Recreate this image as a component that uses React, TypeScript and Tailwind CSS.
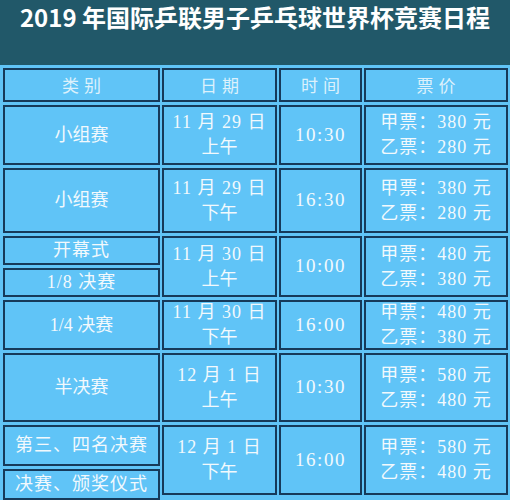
const rows = [
  { type: ["小组赛"], date: "11 月 29 日", half: "上午", time: "10:30", a: "380", b: "280" },
  { type: ["小组赛"], date: "11 月 29 日", half: "下午", time: "16:30", a: "380", b: "280" },
  { type: ["开幕式", "1/8 决赛"], date: "11 月 30 日", half: "上午", time: "10:00", a: "480", b: "380" },
  { type: ["1/4 决赛"], date: "11 月 30 日", half: "下午", time: "16:00", a: "480", b: "380" },
  { type: ["半决赛"], date: "12 月 1 日", half: "上午", time: "10:30", a: "580", b: "480" },
  { type: ["第三、四名决赛", "决赛、颁奖仪式"], date: "12 月 1 日", half: "下午", time: "16:00", a: "580", b: "480" },
];

const cell =
  "border-2 border-[#163a5a] flex flex-col items-center justify-center text-[#f2f9fd]";

export default function App() {
  return (
    <div
      className="w-[510px] h-[500px] overflow-hidden bg-[#60c4f7]"
      style={{ fontFamily: '"Liberation Serif", "Noto Sans CJK SC", serif' }}
    >
      {/* Title bar */}
      <div className="h-[65px] bg-[#215869] pt-[3px] text-center">
        <h1
          className="text-[24px] leading-[27px] font-bold text-white"
          style={{ fontFamily: '"Noto Sans CJK SC", "Noto Sans", sans-serif' }}
        >
          2019 年国际乒联男子乒乓球世界杯竞赛日程
        </h1>
      </div>

      {/* Schedule table */}
      <div className="pt-[3px] pl-[3px] grid grid-cols-[157px_115px_83px_144px] grid-rows-[34px_60px_65px_61px_50px_69px_70px] gap-x-[2px] gap-y-[3px]">
        {["类别", "日期", "时间", "票价"].map((h) => (
          <div
            key={h}
            className="border-2 border-[#163a5a] flex items-center justify-center text-[17px] tracking-[5px] pl-[5px] text-[#dcf1fc]"
            style={{ fontFamily: '"Noto Sans CJK SC", sans-serif' }}
          >
            {h}
          </div>
        ))}

        {rows.map((r, i) => (
          <div key={i} className="contents">
            {r.type.length === 1 ? (
              <div className={`${cell} text-[18px]`}>{r.type[0]}</div>
            ) : i === 5 ? (
              <div className="grid grid-rows-[41px_1fr] gap-[3px]">
                <div className={`${cell} text-[18px] tracking-[1px]`}>{r.type[0]}</div>
                <div className={`${cell} text-[18px] tracking-[1px]`}>{r.type[1]}</div>
              </div>
            ) : (
              <div className="grid grid-rows-2 gap-[3px]">
                <div className={`${cell} text-[18px] tracking-[1px]`}>{r.type[0]}</div>
                <div className={`${cell} text-[18px] tracking-[1px]`}>{r.type[1]}</div>
              </div>
            )}
            <div className={`${cell} text-[18px] leading-[25px]`}>
              <span className="tracking-[1px]">{r.date}</span>
              <span>{r.half}</span>
            </div>
            <div className={`${cell} text-[19px] tracking-[1.5px]`}>{r.time}</div>
            <div className={`${cell} text-[18px] leading-[25px] tracking-[1px]`}>
              <span>甲票：{r.a} 元</span>
              <span>乙票：{r.b} 元</span>
            </div>
          </div>
        ))}
      </div>
    </div>
  );
}
